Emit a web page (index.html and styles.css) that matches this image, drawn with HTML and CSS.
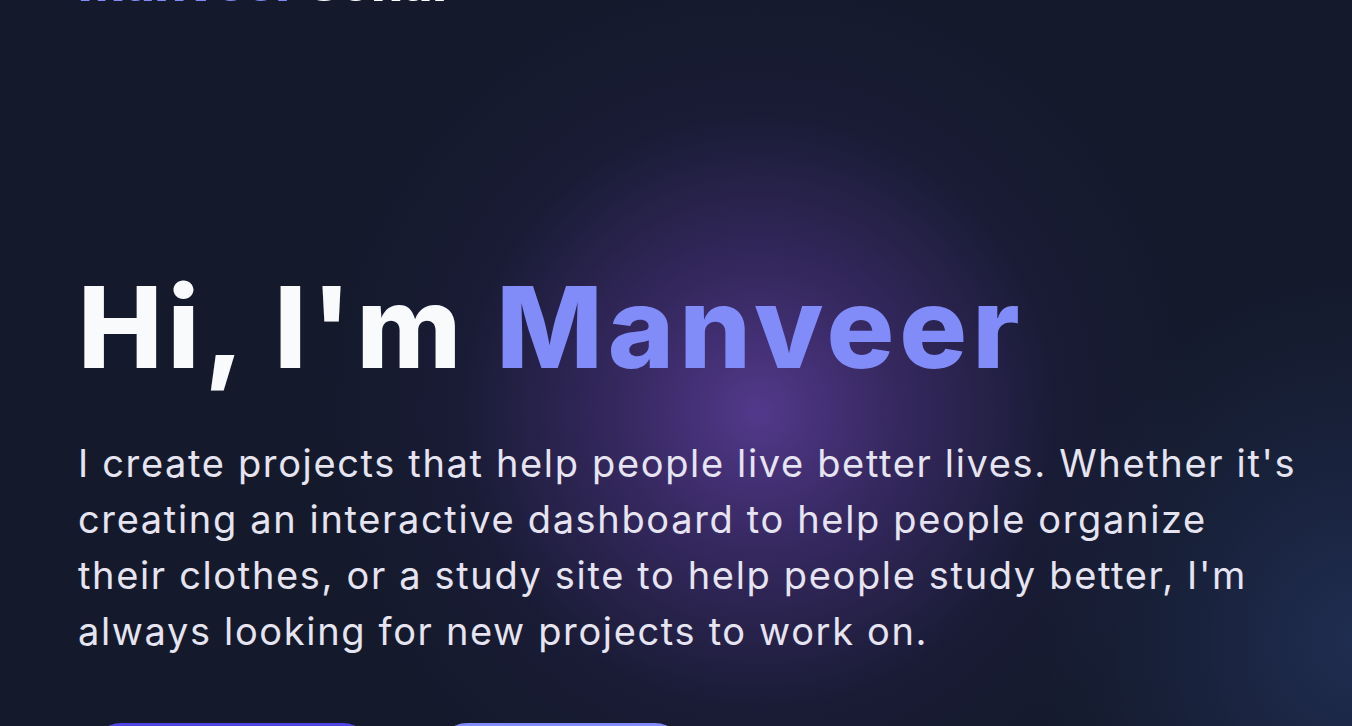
FILE: index.html
```html
<!DOCTYPE html>
<html lang="en">
<head>
<meta charset="utf-8">
<title>Manveer Sohal</title>
<link rel="stylesheet" href="styles.css">
</head>
<body>
<div class="page">
  <header class="brand"><span class="accent">Manveer</span> Sohal</header>
  <section class="hero">
    <h1 class="hero-title">Hi, I'm <span class="accent">Manveer</span></h1>
    <p class="hero-text">I create projects that help people live better lives. Whether it's creating an interactive dashboard to help people organize their clothes, or a study site to help people study better, I'm always looking for new projects to work on.</p>
    <div class="hero-actions">
      <a class="btn btn-primary" href="#projects">View Projects</a>
      <a class="btn btn-secondary" href="#contact">Contact Me</a>
    </div>
  </section>
</div>
</body>
</html>
```

FILE: styles.css
```css
html, body {
  margin: 0;
  padding: 0;
  height: 100%;
  overflow: hidden;
}
body {
  background-color: #141a2c;
  background-image:
    radial-gradient(circle at 758px 412px, rgba(86, 58, 144, 0.95) 0px, rgba(72, 48, 124, 0.64) 140px, rgba(40, 32, 80, 0.26) 300px, rgba(20, 26, 44, 0) 430px),
    radial-gradient(ellipse 320px 360px at 1352px 640px, rgba(32, 46, 82, 0.95) 0px, rgba(30, 42, 76, 0.5) 160px, rgba(20, 26, 44, 0) 320px);
  font-family: "Inter", "Liberation Sans", sans-serif;
  color: #f8fafc;
}
.page {
  padding: 0 0 0 78px;
}
.accent {
  color: #818cf8;
}
.brand {
  margin-top: -42px;
  font-size: 50px;
  line-height: 50px;
  font-weight: 800;
  letter-spacing: 0;
  color: #f8fafc;
  height: 50px;
}
.hero {
  padding-top: 263px;
}
.hero-title {
  margin: 0;
  font-size: 113px;
  line-height: 113px;
  font-weight: 800;
  letter-spacing: 5px;
  color: #f8fafc;
}
.hero-text {
  margin: 51px 0 0 0;
  max-width: 1222px;
  font-size: 38px;
  line-height: 56px;
  font-weight: 400;
  letter-spacing: 1.65px;
  color: #e6e4f0;
}
.hero-actions {
  display: flex;
  gap: 66px;
  margin-top: 64px;
  padding-left: 14px;
}
.btn {
  display: inline-flex;
  align-items: center;
  justify-content: center;
  height: 58px;
  border-radius: 999px;
  font-size: 22px;
  font-weight: 600;
  color: #ffffff;
  text-decoration: none;
}
.btn-primary {
  width: 280px;
  background: #4f46e5;
}
.btn-secondary {
  width: 246px;
  background: #818cf8;
}
```
